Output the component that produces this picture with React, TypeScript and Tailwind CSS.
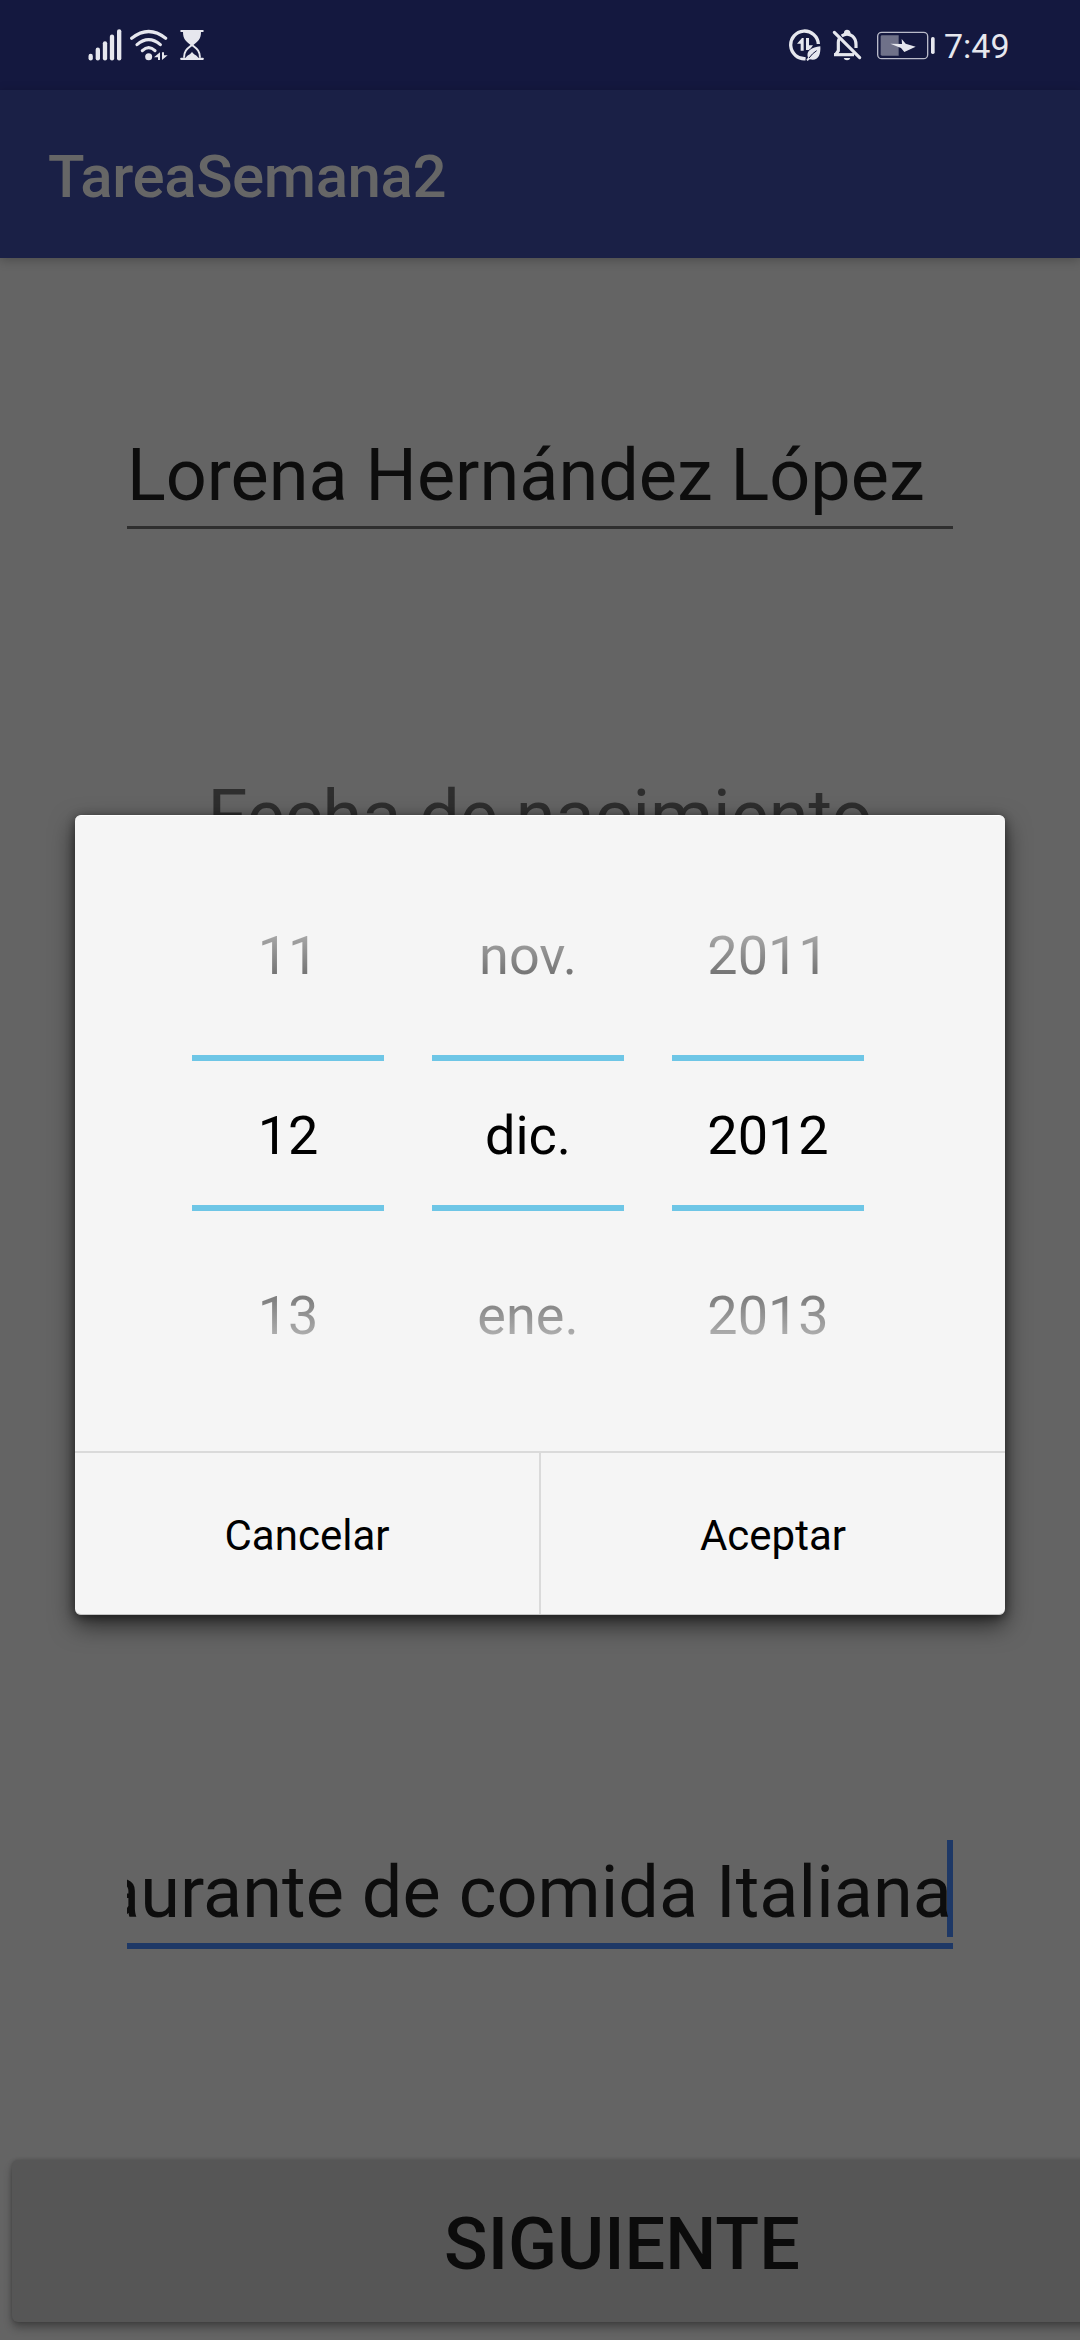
import React from "react";

const INK = "#e6e7ee";

function SignalIcon() {
  const bars: [number, number][] = [
    [62, 138],
    [83.5, 119],
    [105, 100],
    [126, 80],
    [147.5, 64],
  ];
  return (
    <svg className="h-[34px] w-[35px] shrink-0" viewBox="54 54 105 102" stroke={INK} strokeWidth="13" strokeLinecap="round">
      {bars.map(([x, top]) => (
        <line key={x} x1={x} x2={x} y1={top} y2="145" />
      ))}
    </svg>
  );
}

function WifiIcon() {
  return (
    <svg className="ml-[6px] h-[34px] w-[39px] shrink-0" viewBox="177 54 117 102">
      <g fill="none" stroke={INK} strokeWidth="9.5" strokeLinecap="round">
        <path d="M185 85 Q236 44 287 85" />
        <path d="M201 104 Q236 74 271 104" />
        <path d="M217 122 Q236 104 255 122" />
      </g>
      <circle cx="236" cy="140" r="10.5" fill={INK} />
      <path d="M270 127 V150 H264 V142 H252 Z" fill={INK} />
      <path d="M276 150 V127 H282 V136 H293 Z" fill={INK} />
    </svg>
  );
}

function HourglassIcon() {
  return (
    <svg className="ml-[12px] h-[34px] w-[24px] shrink-0" viewBox="330 54 72 102">
      <rect x="331" y="60" width="70" height="6" rx="2" fill={INK} />
      <rect x="331" y="143" width="70" height="7" rx="2" fill={INK} />
      <path d="M339 66 H393 C393 88 383 95 370 105 H362 C349 95 339 88 339 66 Z" fill={INK} />
      <path d="M342 143 C342 122 352 116 366 105 C380 116 390 122 390 143" fill="none" stroke={INK} strokeWidth="6" />
      <path d="M347 144 C351 134 360 136 366 125 C372 136 381 134 385 144 Z" fill={INK} />
    </svg>
  );
}

function DataSaverIcon() {
  return (
    <svg className="h-[34px] w-[32px] shrink-0" viewBox="57 54 96 102">
      <path d="M107 146 A41.5 41.5 0 1 1 145 102" fill="none" stroke={INK} strokeWidth="10" />
      <path d="M101 84 V122 H92 V101 H81 L96 84 Z" fill={INK} />
      <path d="M108 84 H117 V106 H129 L119 120 H108 Z" fill={INK} />
      <path
        d="M151 109 C153 136 143 155 119 148 L113 153 L109 149 L114 143 C107 122 125 113 151 109 Z"
        fill={INK}
        stroke="#14183f"
        strokeWidth="4"
        paintOrder="stroke"
      />
      <path d="M117 144 Q127 130 140 122" stroke="#14183f" strokeWidth="3" fill="none" />
    </svg>
  );
}

function BellOffIcon() {
  return (
    <svg className="ml-[11px] h-[34px] w-[30px] shrink-0" viewBox="186 54 90 102">
      <g fill="none" stroke={INK} strokeWidth="9.5">
        <path d="M193 67 L269 143" strokeLinecap="round" />
        <path d="M192 134 H252" />
        <path d="M197 134 L205 122 V97 Q205 91 208 86" />
        <path d="M215 78 Q231 67 247 78 Q258 87 258 104 V114" />
      </g>
      <path d="M222 75 V67 Q223 59 231 59 Q240 59 241 67 V75 Z" fill={INK} />
      <path d="M221 144 H241 Q239 151 231 151 Q223 151 221 144 Z" fill={INK} />
    </svg>
  );
}

function BatteryIcon() {
  return (
    <svg className="ml-[14px] h-[34px] w-[60px] shrink-0" viewBox="318 54 180 102">
      <rect x="323" y="67" width="150" height="79" rx="12" fill="none" stroke="#b9bac9" strokeWidth="4" />
      <path d="M336 76 H386 V137 H336 Q332 137 332 133 V80 Q332 76 336 76 Z" fill="#6f7189" />
      <rect x="483" y="81" width="11" height="51" rx="5" fill={INK} />
      <path d="M395 87 L407 101 L437 110 L403 126 L393 114 L361 101 L396 102 Z" fill={INK} />
    </svg>
  );
}

function StatusBar() {
  return (
    <div className="flex h-[90px] items-start justify-between bg-[#14183f] pt-[28px] pr-[70px] pl-[88px]">
      <div className="flex">
        <SignalIcon />
        <WifiIcon />
        <HourglassIcon />
      </div>
      <div className="flex">
        <DataSaverIcon />
        <BellOffIcon />
        <BatteryIcon />
        <span className="ml-[8px] w-[66px] text-[34px] leading-[36px] whitespace-nowrap text-[#e6e7ee]">7:49</span>
      </div>
    </div>
  );
}

type Column = { before: string; selected: string; after: string };

const columns: Column[] = [
  { before: "11", selected: "12", after: "13" },
  { before: "nov.", selected: "dic.", after: "ene." },
  { before: "2011", selected: "2012", after: "2013" },
];

function PickerColumn({ before, selected, after }: Column) {
  return (
    <div className="flex w-[192px] flex-col text-center text-[54px] leading-[72px]">
      <span className="bg-linear-to-b from-[#bbbbbb] to-[#5f5f5f] bg-clip-text text-transparent">{before}</span>
      <div className="mt-[63px] flex h-[156px] items-center justify-center border-y-[6px] border-[#6ec6e6] pt-[5px] text-black">
        {selected}
      </div>
      <span className="mt-[69px] bg-linear-to-b from-[#6a6a6a] to-[#c2c2c2] bg-clip-text text-transparent">{after}</span>
    </div>
  );
}

function DateDialog() {
  return (
    <div className="flex h-[800px] w-[930px] flex-col overflow-hidden rounded-[6px] border-t border-b border-t-white border-b-[#c4c4c4] bg-[#f5f5f5] shadow-[0_10px_24px_rgba(0,0,0,0.6),0_2px_10px_rgba(0,0,0,0.45)]">
      <div className="flex h-[635px] gap-[48px] pt-[104px] pl-[117px]">
        {columns.map((c) => (
          <PickerColumn key={c.selected} {...c} />
        ))}
      </div>
      <div className="flex flex-1 border-t-2 border-[#dadada] text-[42px] leading-[50px] text-black">
        <button className="w-[466px] border-r-2 border-[#dadada] pt-[4px]">Cancelar</button>
        <button className="flex-1 pt-[4px]">Aceptar</button>
      </div>
    </div>
  );
}

export default function App() {
  return (
    <div className="relative flex h-[2340px] w-[1080px] flex-col overflow-hidden bg-[#646464] font-['Roboto',sans-serif]">
      <StatusBar />
      <header className="flex h-[168px] items-center bg-[#1a2046] pt-[6px] pl-[48px] text-[60px] leading-[70px] font-medium tracking-[-0.4px] text-[#666666] shadow-[0_2px_10px_rgba(0,0,0,0.25)]">
        TareaSemana2
      </header>

      <main className="flex flex-1 flex-col text-[72px] leading-[84px] text-[#0d0d0d]">
        <div className="mt-[176px] ml-[127px] h-[95px] w-[826px] border-b-[3px] border-[#2e2e2e] whitespace-nowrap">
          Lorena Hernández López
        </div>
        <div className="mt-[246px] text-center text-[#2e2e2e]">Fecha de nacimiento</div>
        <div className="mt-[981px] ml-[127px] h-[109px] w-[826px] border-b-[6px] border-[#1e3866]">
          <div className="relative flex h-[97px] items-center justify-end overflow-hidden pr-[1px] whitespace-nowrap">
            <span className="absolute right-0 h-[97px] w-[6px] bg-[#1e3866]" />
            <span className="relative pt-[8px] tracking-[0.06px]">Restaurante de comida Italiana</span>
          </div>
        </div>
        <button className="mt-[211px] ml-[12px] flex h-[162px] w-[1220px] shrink-0 items-center justify-center rounded-[6px] bg-[#565656] pt-[8px] font-medium text-[#0b0b0b] shadow-[0_6px_8px_rgba(0,0,0,0.3),0_0_4px_rgba(0,0,0,0.2)]">
          SIGUIENTE
        </button>
      </main>

      <div className="absolute inset-0 flex justify-center pt-[815px]">
        <DateDialog />
      </div>
    </div>
  );
}
